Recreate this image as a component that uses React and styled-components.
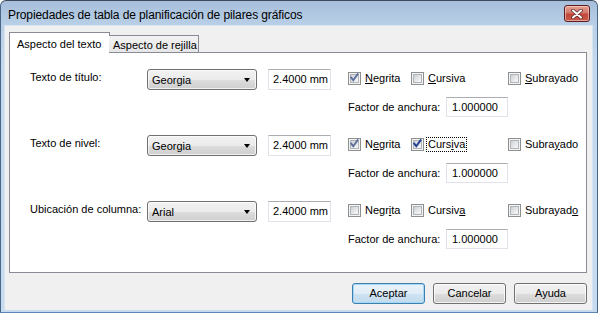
import React from "react";
import styled, { createGlobalStyle, css } from "styled-components";

const Global = createGlobalStyle`
  html, body { margin: 0; padding: 0; background: #ffffff; }
  body { font-family: "Liberation Sans", Arial, sans-serif; font-size: 11px; color: #000; }
  * { box-sizing: border-box; }
`;

const Window = styled.div`
  width: 598px;
  height: 313px;
  display: flex;
  flex-direction: column;
  border: 1px solid #5b86b3;
  border-top-color: #3d4a58;
  border-left-color: #4a6686;
  border-right-color: #4a6686;
  border-radius: 6px 6px 0 0;
  background: linear-gradient(#a7bfdb 0px, #b8cfe7 24px, #c3d8ee 60px, #c6dbf0);
  padding: 0 4px 2px 3px;
`;

const TitleBar = styled.div`
  height: 24px;
  display: flex;
  align-items: flex-start;
  padding-left: 4px;
`;

const Title = styled.div`
  font-family: "Liberation Sans", Arial, sans-serif;
  font-size: 12px;
  line-height: 14px;
  padding-top: 7px;
  color: #000;
  letter-spacing: -0.1px;
`;

const CloseButton = styled.div`
  margin-left: auto;
  margin-top: 4px;
  margin-right: 3px;
  width: 26px;
  height: 17px;
  border: 1px solid #5c1f21;
  border-radius: 3px;
  background: linear-gradient(#e5a293 0%, #d3786a 45%, #c2463a 55%, #c75a4a 100%);
  box-shadow: inset 0 0 0 1px rgba(255, 220, 210, 0.55);
  display: flex;
  align-items: center;
  justify-content: center;
`;

const Client = styled.div`
  flex: 1;
  background: #f0f0f0;
  border: 1px solid #d7e4f2;
  border-bottom: none;
  padding: 6px 5px 0 4px;
  display: flex;
  flex-direction: column;
`;

const TabStrip = styled.div`
  height: 20px;
  display: flex;
  align-items: flex-end;
  position: relative;
  z-index: 1;
`;

const Tab = styled.div`
  border: 1px solid #898c95;
  border-bottom: none;
  font-size: 11px;
  white-space: nowrap;
  ${(p) =>
    p.$active
      ? css`
          width: 101px;
          height: 21px;
          margin-bottom: -1px;
          background: #ffffff;
          padding: 5px 0 0 7px;
        `
      : css`
          width: 90px;
          height: 17px;
          margin-left: -1px;
          background: linear-gradient(#f3f3f3, #e6e6e6);
          padding: 3px 0 0 4px;
          border-left: none;
        `}
`;

const Panel = styled.div`
  height: 221px;
  border: 1px solid #898c95;
  background: #ffffff;
  padding: 16px 0 0 20px;
  display: flex;
  flex-direction: column;
  gap: 18px;
`;

const Group = styled.div`
  display: flex;
  align-items: flex-start;
  height: 48px;
`;

const Label = styled.div`
  width: 117px;
  padding-top: 2px;
  line-height: 13px;
`;

const Combo = styled.div`
  width: 110px;
  height: 21px;
  border: 1px solid #707070;
  border-radius: 3px;
  background: linear-gradient(#f2f2f2 0%, #ebebeb 50%, #dddddd 51%, #cfcfcf 100%);
  box-shadow: inset 0 0 0 1px rgba(255, 255, 255, 0.7);
  display: flex;
  align-items: center;
  padding-left: 4px;
  padding-right: 6px;
  line-height: 13px;
`;

const ComboText = styled.span`
  flex: 1;
  padding-top: 1px;
`;

const Arrow = styled.span`
  width: 0;
  height: 0;
  border-left: 3.5px solid transparent;
  border-right: 3.5px solid transparent;
  border-top: 4px solid #000;
  margin-top: 1px;
`;

const Edit = styled.div`
  width: ${(p) => p.$w}px;
  height: ${(p) => p.$h}px;
  border: 1px solid #e2e3ea;
  border-top-color: #abadb3;
  background: #ffffff;
  padding-left: ${(p) => p.$pad}px;
  display: flex;
  align-items: center;
  line-height: 13px;
  margin-left: ${(p) => p.$ml || 0}px;
`;

const Options = styled.div`
  margin-left: 17px;
  display: flex;
  flex-direction: column;
  padding-top: 3px;
`;

const CheckRow = styled.div`
  display: flex;
  height: 13px;
  align-items: center;
`;

const CheckItem = styled.label`
  display: flex;
  align-items: center;
  width: ${(p) => (p.$w ? `${p.$w}px` : "auto")};
  gap: 3px;
  line-height: 13px;
`;

const Box = styled.span`
  width: 13px;
  height: 13px;
  border: 1px solid #8e8f8f;
  background: #f4f4f4;
  padding: 1px;
  display: flex;
`;

const BoxInner = styled.span`
  flex: 1;
  border: 1px solid #b1b5ba;
  background: linear-gradient(135deg, #cbcfd5 0%, #e6e8ea 55%, #f7f7f7 100%);
  position: relative;
`;

const CheckSvg = styled.svg`
  position: absolute;
  left: -2px;
  top: -3px;
`;

const CheckText = styled.span`
  padding: 0 1px;
  border: 1px dotted ${(p) => (p.$focus ? "#000" : "transparent")};
  margin-left: -1px;
  white-space: nowrap;
`;

const U = styled.span`
  text-decoration: underline;
  text-underline-offset: 1px;
`;

const FactorRow = styled.div`
  display: flex;
  align-items: center;
  margin-top: 12px;
`;

const FactorLabel = styled.span`
  width: 98px;
`;

const ButtonRow = styled.div`
  display: flex;
  justify-content: flex-end;
  gap: 8px;
  margin-top: 10px;
  padding-right: 0;
`;

const Button = styled.div`
  width: 73px;
  height: 21px;
  border: 1px solid ${(p) => (p.$default ? "#3c7fb1" : "#707070")};
  border-radius: 3px;
  background: ${(p) =>
    p.$default
      ? "linear-gradient(#eaf3fa 0%, #e0edf7 50%, #cfe3f2 51%, #c2dbee 100%)"
      : "linear-gradient(#f2f2f2 0%, #ebebeb 50%, #dddddd 51%, #cfcfcf 100%)"};
  box-shadow: inset 0 0 0 1px ${(p) => (p.$default ? "#a6d8f4" : "rgba(255,255,255,0.75)")};
  display: flex;
  align-items: center;
  justify-content: center;
  line-height: 13px;
`;

function Check({ checked, tone }) {
  return (
    <Box>
      <BoxInner>
        {checked && (
          <CheckSvg width="11" height="11" viewBox="0 0 11 11">
            <path
              d="M2.2 5.6 L4.3 8.2 L8.6 2.2"
              fill="none"
              stroke={tone === "dark" ? "#213f8f" : "#5f6f9c"}
              strokeWidth="1.9"
              strokeLinecap="square"
            />
          </CheckSvg>
        )}
      </BoxInner>
    </Box>
  );
}

function Mn({ text, idx }) {
  return (
    <>
      {text.slice(0, idx)}
      <U>{text[idx]}</U>
      {text.slice(idx + 1)}
    </>
  );
}

const rows = [
  {
    label: "Texto de título:",
    font: "Georgia",
    opts: [
      { text: "Negrita", u: 0, checked: true, tone: "light", w: 63 },
      { text: "Cursiva", u: 0, checked: false, w: 97 },
      { text: "Subrayado", u: 0, checked: false },
    ],
  },
  {
    label: "Texto de nivel:",
    font: "Georgia",
    opts: [
      { text: "Negrita", u: 1, checked: true, tone: "light", w: 63 },
      { text: "Cursiva", u: 4, checked: true, tone: "dark", w: 97, focus: true },
      { text: "Subrayado", u: 5, checked: false },
    ],
  },
  {
    label: "Ubicación de columna:",
    font: "Arial",
    opts: [
      { text: "Negrita", u: 4, checked: false, w: 63 },
      { text: "Cursiva", u: 6, checked: false, w: 97 },
      { text: "Subrayado", u: 8, checked: false },
    ],
  },
];

export default function App() {
  return (
    <>
      <Global />
      <Window>
        <TitleBar>
          <Title>Propiedades de tabla de planificación de pilares gráficos</Title>
          <CloseButton>
            <svg width="12" height="10" viewBox="0 0 12 10">
              <path
                d="M2 1.5 L10 8.5 M10 1.5 L2 8.5"
                stroke="#5a2a2a"
                strokeWidth="3.6"
                strokeLinecap="round"
              />
              <path
                d="M2 1.5 L10 8.5 M10 1.5 L2 8.5"
                stroke="#ffffff"
                strokeWidth="2"
                strokeLinecap="round"
              />
            </svg>
          </CloseButton>
        </TitleBar>
        <Client>
          <TabStrip>
            <Tab $active>Aspecto del texto</Tab>
            <Tab>Aspecto de rejilla</Tab>
          </TabStrip>
          <Panel>
            {rows.map((r) => (
              <Group key={r.label}>
                <Label>{r.label}</Label>
                <Combo>
                  <ComboText>{r.font}</ComboText>
                  <Arrow />
                </Combo>
                <Edit $w={63} $h={21} $pad={4} $ml={11}>
                  2.4000 mm
                </Edit>
                <Options>
                  <CheckRow>
                    {r.opts.map((o) => (
                      <CheckItem key={o.text} $w={o.w}>
                        <Check checked={o.checked} tone={o.tone} />
                        <CheckText $focus={o.focus}>
                          <Mn text={o.text} idx={o.u} />
                        </CheckText>
                      </CheckItem>
                    ))}
                  </CheckRow>
                  <FactorRow>
                    <FactorLabel>Factor de anchura:</FactorLabel>
                    <Edit $w={62} $h={20} $pad={5}>
                      1.000000
                    </Edit>
                  </FactorRow>
                </Options>
              </Group>
            ))}
          </Panel>
          <ButtonRow>
            <Button $default>Aceptar</Button>
            <Button>Cancelar</Button>
            <Button>Ayuda</Button>
          </ButtonRow>
        </Client>
      </Window>
    </>
  );
}
